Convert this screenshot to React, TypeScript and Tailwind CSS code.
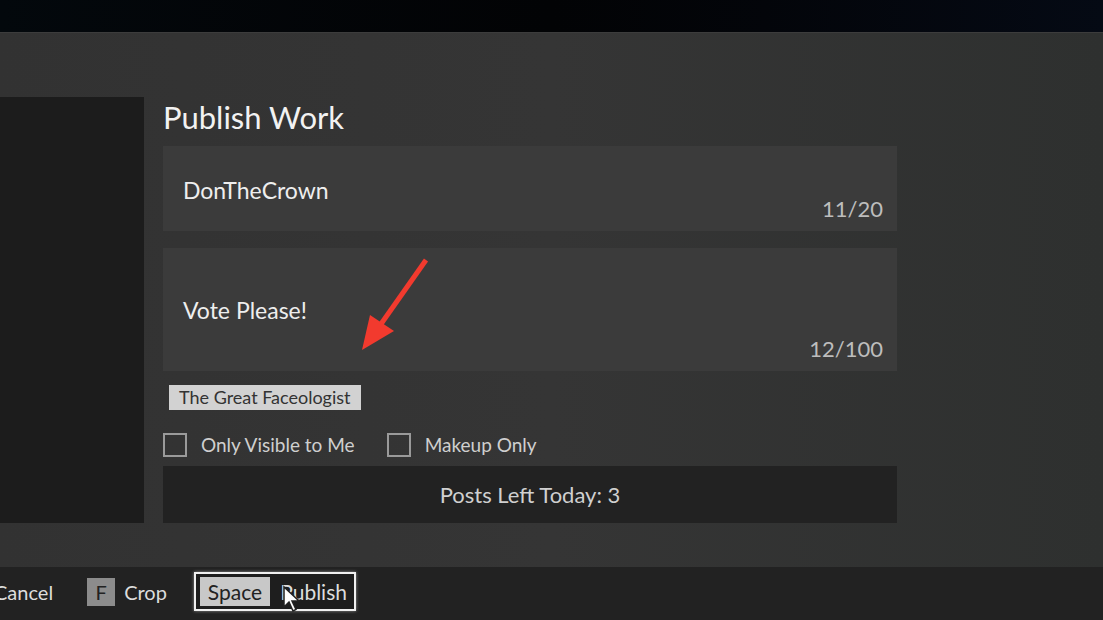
import React from "react";

const font = { fontFamily: "Lato, 'Open Sans', sans-serif" };

const Checkbox = ({ label }: { label: string }) => (
  <div className="flex items-center gap-[14px]">
    <div className="w-[24px] h-[24px] border-2 border-[#9a9a9a]"></div>
    <span className="text-[19px] leading-[24px] text-[#cfcfcf]">{label}</span>
  </div>
);

const App = () => {
  return (
    <div className="w-[1103px] h-[620px] overflow-hidden flex flex-col bg-[#333333] relative" style={font}>
      {/* top strip */}
      <div className="h-[33px] bg-gradient-to-r from-[#03080c] via-[#020305] to-[#050a14] border-b border-[#3c3c3c]"></div>

      {/* main panel */}
      <div className="flex-1 flex bg-gradient-to-r from-[#323232] via-[#353535] to-[#2e302f]">
        <div className="w-[144px] h-[426px] mt-[64px] bg-[#1c1c1c]"></div>
        <div className="ml-[19px] w-[734px] mt-[63px] flex flex-col">
          <h1 className="text-[31px] leading-[42px] text-[#f2f2f2]">Publish Work</h1>
          <div className="mt-[8px] h-[85px] bg-[#3b3b3b] relative flex flex-col px-[20px]">
            <span className="text-[23px] text-[#eeeeee] mt-[30px] leading-[28px]">DonTheCrown</span>
            <span className="absolute right-[14px] bottom-[6px] text-[22px] text-[#bdbdbd]">11/20</span>
          </div>
          <div className="mt-[17px] h-[123px] bg-[#3b3b3b] relative flex flex-col px-[20px]">
            <span className="text-[23px] text-[#eeeeee] mt-[48px] leading-[28px]">Vote Please!</span>
            <span className="absolute right-[14px] bottom-[6px] text-[22px] text-[#bdbdbd]">12/100</span>
          </div>
          <div className="mt-[14px] ml-[6px] self-start h-[25px] px-[10px] bg-[#d2d2d2] text-[#333333] text-[18px] leading-[25px]">
            The Great Faceologist
          </div>
          <div className="mt-[23px] flex gap-[32px]">
            <Checkbox label="Only Visible to Me" />
            <Checkbox label="Makeup Only" />
          </div>
          <div className="mt-[9px] h-[57px] bg-[#222222] flex items-center justify-center text-[22px] text-[#d0d0d0]">
            Posts Left Today: 3
          </div>
        </div>
      </div>

      {/* bottom bar */}
      <div className="h-[53px] bg-[#222222] flex items-center pb-[4px] text-[20px] text-[#dddddd]">
        <span className="-ml-[6px]">Cancel</span>
        <div className="ml-[34px] w-[28px] h-[28px] bg-[#8c8c8c] text-[#222222] flex items-center justify-center">F</div>
        <span className="ml-[9px]">Crop</span>
        <div className="ml-[27px] relative border-2 border-[#f0f0f0] h-[39px] flex items-center pl-[4px] pr-[7px] bg-[#1e1e1e] text-[21px] shadow-[0_0_3px_rgba(255,255,255,0.5)]">
          <div className="h-[29px] px-[8px] bg-[#c8c8c8] text-[#222222] flex items-center">Space</div>
          <span className="ml-[10px]">Publish</span>
          <svg className="absolute left-[86px] top-[11px]" width="24" height="28" viewBox="0 0 24 28">
            <path d="M2 2 L2 22 L7 17 L11 26 L14 24.5 L10 16 L17 16 Z" fill="#ffffff" stroke="#222" strokeWidth="1.5" />
          </svg>
        </div>
      </div>

      {/* red annotation arrow */}
      <svg className="absolute left-0 top-0 pointer-events-none" width="1103" height="620">
        <line x1="426" y1="260" x2="381" y2="324" stroke="#f23a2e" strokeWidth="5" />
        <polygon points="362,350 370,315 394,331" fill="#f23a2e" />
      </svg>
    </div>
  );
};

export default App;
